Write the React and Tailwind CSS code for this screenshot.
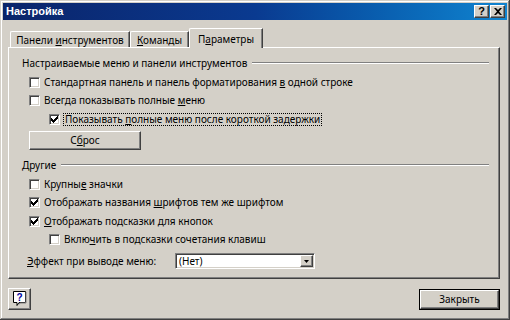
import React from 'react';

const raised =
  'border border-t-white border-l-white border-r-[#404040] border-b-[#404040] shadow-[inset_-1px_-1px_#808080]';

const U = ({ children }) => <span className="underline underline-offset-1">{children}</span>;

function Box({ checked }) {
  return (
    <span className="relative shrink-0 w-[11px] h-[11px] bg-white border border-t-[#808080] border-l-[#808080] border-r-white border-b-white shadow-[inset_1px_1px_#404040,inset_-1px_-1px_#d4d0c8]">
      {checked && (
        <svg width="7" height="7" viewBox="0 0 7 7" className="absolute left-[1px] top-[1px]">
          <path d="M0 2h1v1h1v1h1V3h1V2h1V1h1V0h1v3h-1v1h-1v1h-1v1h-1v1H2V6H1V5H0z" fill="#000" />
        </svg>
      )}
    </span>
  );
}

function Check({ checked, indent, focus, className = '', children }) {
  return (
    <div className={`flex items-center h-[18px] ${indent ? 'pl-[40px]' : 'pl-[20px]'} ${className}`}>
      <Box checked={checked} />
      {focus ? (
        <span className="ml-[3px] px-[1px] h-[13px] leading-[11px] border border-dotted border-black whitespace-nowrap">
          {children}
        </span>
      ) : (
        <span className="ml-[4px] whitespace-nowrap">{children}</span>
      )}
    </div>
  );
}

function GroupLabel({ className = '', children }) {
  return (
    <div className={`flex items-center h-[14px] pl-[13px] pr-[10px] ${className}`}>
      <span className="whitespace-nowrap">{children}</span>
      <div className="flex-1 ml-[5px] h-[2px] border-t border-t-[#808080] border-b border-b-white" />
    </div>
  );
}

export default function App() {
  return (
    <div className="w-[510px] h-[320px] bg-[#d4d0c8] p-[3px] text-[10px] leading-[13px] text-black [font-family:'Noto_Sans',sans-serif] shadow-[inset_-1px_-1px_#404040,inset_1px_1px_#d4d0c8,inset_-2px_-2px_#808080,inset_2px_2px_#ffffff]">
      {/* Title bar */}
      <div className="flex items-center h-[17px] pl-[3px] pr-[2px] bg-linear-to-r from-[#0a246a] via-[#0a3a90] to-[#1084d0]">
        <span className="text-white font-bold text-[11px] [font-family:'Liberation_Sans',Arial,sans-serif]">Настройка</span>
        <div className="ml-auto flex items-center gap-[1px]">
          <div className={`w-[15px] h-[13px] bg-[#d4d0c8] flex items-center justify-center font-bold text-[11px] leading-[11px] [font-family:'Liberation_Sans',Arial,sans-serif] ${raised}`}>
            ?
          </div>
          <div className={`w-[15px] h-[13px] bg-[#d4d0c8] flex items-center justify-center ${raised}`}>
            <svg width="8" height="7" viewBox="0 0 8 7">
              <path d="M0 0h2l2 2 2-2h2L5 3.5 8 7H6L4 5 2 7H0l3-3.5z" fill="#000" />
            </svg>
          </div>
        </div>
      </div>

      {/* Tabs */}
      <div className="flex items-end h-[19px] mt-[8px] ml-[5px] pl-[2px]">
        <div className="w-[120px] h-[16px] pt-[2px] text-center border-l border-t border-l-white border-t-white border-r border-r-[#404040] rounded-tl-[2px] shadow-[inset_-1px_0_#808080]">
          Панели <U>и</U>нструментов
        </div>
        <div className="w-[59px] h-[16px] pt-[2px] text-center border-l border-t border-l-white border-t-white border-r border-r-[#404040] rounded-tl-[2px] shadow-[inset_-1px_0_#808080]">
          <U>К</U>оманды
        </div>
        <div className="relative z-10 -mb-[1px] w-[74px] h-[20px] pt-[4px] text-center bg-[#d4d0c8] border-l border-t border-l-white border-t-white border-r border-r-[#404040] rounded-tl-[2px] shadow-[inset_-1px_0_#808080]">
          П<U>а</U>раметры
        </div>
      </div>

      {/* Panel */}
      <div className={`ml-[5px] w-[492px] h-[232px] flex flex-col ${raised}`}>
        <GroupLabel className="mt-[8px]">Настраиваемые меню и панели инструментов</GroupLabel>
        <Check className="mt-[3px]">
          Стандартная панель и панель форматирования <U>в</U> одной строке
        </Check>
        <Check>
          Всегда показывать полные <U>м</U>еню
        </Check>
        <Check className="mt-[1px]" indent checked focus>
          Показывать <U>п</U>олные меню после короткой задержки
        </Check>
        <div className="pl-[20px] mt-[3px]">
          <div className={`w-[112px] h-[19px] flex items-center justify-center ${raised}`}>
            <span>
              С<U>б</U>рос
            </span>
          </div>
        </div>

        <GroupLabel className="mt-[8px]">Другие</GroupLabel>
        <Check className="mt-[3px]">
          Крупны<U>е</U> значки
        </Check>
        <Check checked>
          Отображать названия <U>ш</U>рифтов тем же шрифтом
        </Check>
        <Check className="mt-[1px]" checked>
          <U>О</U>тображать подсказки для кнопок
        </Check>
        <Check indent>
          Вклю<U>ч</U>ить в подсказки сочетания клавиш
        </Check>

        <div className="flex items-center mt-[5px] h-[16px] pl-[18px]">
          <span className="w-[148px] whitespace-nowrap">
            <U>Э</U>ффект при выводе меню:
          </span>
          <div className="w-[140px] h-[16px] bg-white flex items-center border border-t-[#808080] border-l-[#808080] border-r-white border-b-white shadow-[inset_1px_1px_#404040,inset_-1px_-1px_#d4d0c8]">
            <span className="pl-[3px] flex-1">(Нет)</span>
            <div className={`w-[13px] h-[12px] mr-[1px] bg-[#d4d0c8] flex items-center justify-center ${raised}`}>
              <svg width="5" height="3" viewBox="0 0 5 3">
                <path d="M0 0h5L2.5 3z" fill="#000" />
              </svg>
            </div>
          </div>
        </div>
      </div>

      {/* Bottom buttons */}
      <div className="flex items-start mt-[9px] ml-[5px] w-[492px]">
        <div className={`w-[23px] h-[22px] flex items-center justify-center ${raised}`}>
          <svg width="14" height="16" viewBox="0 0 14 16">
            <path d="M0.5 0.5h12v11H6l-2 3v-3H0.5z" fill="#fff" stroke="#000" />
            <path d="M13 1v11H7l-1 1.5" fill="none" stroke="#808080" />
            <text x="6.5" y="9.5" textAnchor="middle" fontSize="10" fontWeight="bold" fill="#0000a0" fontFamily="Liberation Sans, Arial, sans-serif">
              ?
            </text>
          </svg>
        </div>
        <div className="ml-auto mt-[1px] w-[81px] h-[21px] border border-black">
          <div className={`w-full h-full flex items-center justify-center ${raised}`}>Закрыть</div>
        </div>
      </div>
    </div>
  );
}
